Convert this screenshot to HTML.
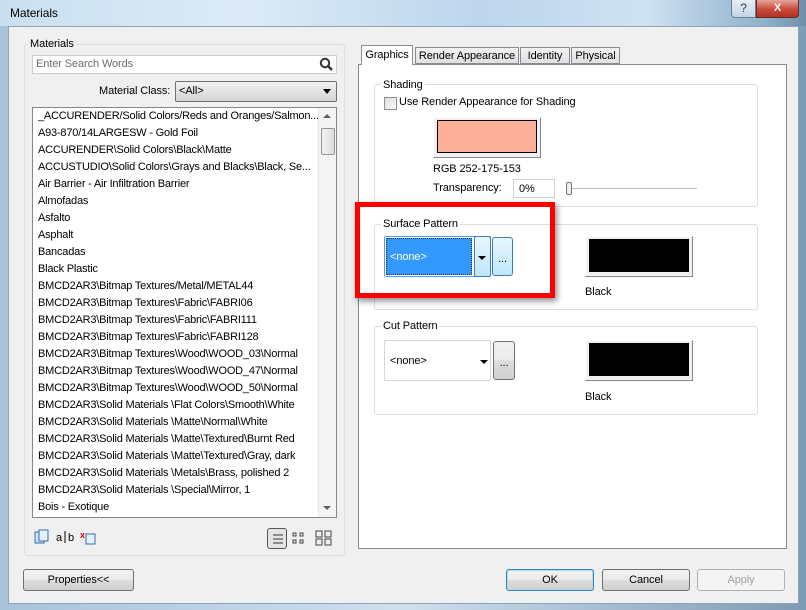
<!DOCTYPE html>
<html><head><style>
*{box-sizing:border-box;margin:0;padding:0}
body{width:806px;height:610px;overflow:hidden;background:#9fb9cf;font-family:"Liberation Sans",sans-serif;font-size:11px;color:#000;position:relative;letter-spacing:-0.1px}
.a{position:absolute}
.title{left:0;top:0;width:806px;height:27px;background:linear-gradient(90deg,#c9dff0 0%,#dcebf7 30%,#bcd6ec 60%,#cfe2f2 80%,#8fb0cc 95%,#6d8da8 100%)}
.frame{left:0;top:26px;width:806px;height:584px;background:linear-gradient(90deg,#a7c3da,#cfe0ee 50%,#7e9bb5)}
.body{left:8px;top:26px;width:791px;height:578px;background:#f0f0f0;border:1px solid #8ea4b8}
.grp{border:1px solid #d5dfe5;border-radius:3px}
.lbl{background:#f0f0f0;padding:0 2px}
.btn{border:1px solid #707070;border-radius:3px;background:linear-gradient(#f2f2f2 0%,#ebebeb 48%,#dddddd 52%,#cfcfcf 100%);text-align:center;line-height:21px;font-size:11px}
.li{position:absolute;left:5px;height:17px;line-height:17px;white-space:nowrap;letter-spacing:-0.2px}
</style></head><body>
<div class="a title"></div>
<div class="a frame"></div>
<div class="a" style="left:10px;top:6px;font-size:12px">Materials</div>
<div class="a" style="left:731px;top:0;width:25px;height:18px;border:1px solid #6b7f94;border-top:none;border-radius:0 0 0 4px;background:linear-gradient(#e6eef6,#c4d4e4);text-align:center;font-size:12px;color:#345;line-height:16px">?</div>
<div class="a" style="left:756px;top:0;width:43px;height:18px;border:1px solid #6b2a20;border-top:none;border-radius:0 0 4px 0;background:linear-gradient(#e6a59a,#c8493a 55%,#b33020);text-align:center;color:#fff;font-weight:bold;line-height:16px">X</div>
<div class="a body"></div>

<div class="a grp" style="left:24px;top:44px;width:321px;height:512px"></div>
<div class="a lbl" style="left:28px;top:38px">Materials</div>
<div class="a" style="left:32px;top:55px;width:305px;height:19px;background:#fff;border:1px solid #c8cfd6"></div>
<div class="a" style="left:36px;top:58px;color:#6d6d6d">Enter Search Words</div>
<svg class="a" style="left:319px;top:57px" width="15" height="15"><circle cx="6" cy="6" r="4.2" fill="none" stroke="#333" stroke-width="2"/><line x1="9" y1="9" x2="13" y2="13" stroke="#333" stroke-width="2.4"/></svg>
<div class="a" style="left:99px;top:85px">Material Class:</div>
<div class="a" style="left:175px;top:81px;width:162px;height:21px;border:1px solid #707070;border-radius:2px;background:linear-gradient(#f2f2f2,#e2e2e2 50%,#d4d4d4)"></div>
<div class="a" style="left:179px;top:85px">&lt;All&gt;</div>
<div class="a" style="left:323px;top:89px;width:0;height:0;border-left:4px solid transparent;border-right:4px solid transparent;border-top:5px solid #000"></div>

<div class="a" style="left:32px;top:107px;width:305px;height:411px;background:#fff;border:1px solid #828790;overflow:hidden">
<div class="li" style="top:0">_ACCURENDER/Solid Colors/Reds and Oranges/Salmon...</div>
<div class="li" style="top:17px">A93-870/14LARGESW - Gold Foil</div>
<div class="li" style="top:34px">ACCURENDER\Solid Colors\Black\Matte</div>
<div class="li" style="top:51px">ACCUSTUDIO\Solid Colors\Grays and Blacks\Black, Se...</div>
<div class="li" style="top:68px">Air Barrier - Air Infiltration Barrier</div>
<div class="li" style="top:85px">Almofadas</div>
<div class="li" style="top:102px">Asfalto</div>
<div class="li" style="top:119px">Asphalt</div>
<div class="li" style="top:136px">Bancadas</div>
<div class="li" style="top:153px">Black Plastic</div>
<div class="li" style="top:170px">BMCD2AR3\Bitmap Textures/Metal/METAL44</div>
<div class="li" style="top:187px">BMCD2AR3\Bitmap Textures\Fabric\FABRI06</div>
<div class="li" style="top:204px">BMCD2AR3\Bitmap Textures\Fabric\FABRI111</div>
<div class="li" style="top:221px">BMCD2AR3\Bitmap Textures\Fabric\FABRI128</div>
<div class="li" style="top:238px">BMCD2AR3\Bitmap Textures\Wood\WOOD_03\Normal</div>
<div class="li" style="top:255px">BMCD2AR3\Bitmap Textures\Wood\WOOD_47\Normal</div>
<div class="li" style="top:272px">BMCD2AR3\Bitmap Textures\Wood\WOOD_50\Normal</div>
<div class="li" style="top:289px">BMCD2AR3\Solid Materials \Flat Colors\Smooth\White</div>
<div class="li" style="top:306px">BMCD2AR3\Solid Materials \Matte\Normal\White</div>
<div class="li" style="top:323px">BMCD2AR3\Solid Materials \Matte\Textured\Burnt Red</div>
<div class="li" style="top:340px">BMCD2AR3\Solid Materials \Matte\Textured\Gray, dark</div>
<div class="li" style="top:357px">BMCD2AR3\Solid Materials \Metals\Brass, polished 2</div>
<div class="li" style="top:374px">BMCD2AR3\Solid Materials \Special\Mirror, 1</div>
<div class="li" style="top:391px">Bois - Exotique</div>
<div class="a" style="left:285px;top:0;width:18px;height:409px;background:#f4f4f4;border-left:1px solid #e8e8e8"></div>
<div class="a" style="left:290px;top:6px;border-left:4px solid transparent;border-right:4px solid transparent;border-bottom:4px solid #606060"></div>
<div class="a" style="left:288px;top:20px;width:14px;height:27px;border:1px solid #979797;border-radius:2px;background:linear-gradient(90deg,#f2f2f2,#dcdcdc)"></div>
<div class="a" style="left:290px;top:398px;border-left:4px solid transparent;border-right:4px solid transparent;border-top:4px solid #606060"></div>
</div>
<svg class="a" style="left:34px;top:529px" width="80" height="16"><rect x="1" y="3" width="9" height="11" fill="#cfe3f7" stroke="#2f6fb7"/><rect x="5" y="1" width="9" height="11" fill="#e6f0fb" stroke="#2f6fb7"/><text x="22" y="12" font-size="11" font-family="Liberation Sans">a</text><line x1="31" y1="2" x2="31" y2="14" stroke="#000"/><text x="34" y="12" font-size="11" font-family="Liberation Sans">b</text><rect x="52" y="5" width="9" height="10" fill="#e6f0fb" stroke="#2f6fb7"/><text x="46" y="9" font-size="9" fill="#d00" font-weight="bold">x</text></svg>
<div class="a" style="left:267px;top:528px;width:20px;height:21px;border:1px solid #555;border-radius:3px;background:#e4e4e4"></div>
<svg class="a" style="left:269px;top:530px" width="70" height="17"><g stroke="#333"><line x1="4" y1="5" x2="14" y2="5"/><line x1="4" y1="9" x2="14" y2="9"/><line x1="4" y1="13" x2="14" y2="13"/></g><g fill="none" stroke="#444"><rect x="24" y="3" width="3" height="3"/><rect x="31" y="3" width="3" height="3"/><rect x="24" y="10" width="3" height="3"/><rect x="31" y="10" width="3" height="3"/><rect x="47" y="1" width="6" height="6"/><rect x="56" y="1" width="6" height="6"/><rect x="47" y="9" width="6" height="6"/><rect x="56" y="9" width="6" height="6"/></g></svg>

<div class="a" style="left:358px;top:64px;width:429px;height:485px;background:#fff;border:1px solid #898c95"></div>
<div class="a" style="left:361px;top:45px;width:52px;height:20px;background:#fff;border:1px solid #898c95;border-bottom:none;line-height:19px;text-align:center">Graphics</div>
<div class="a" style="left:415px;top:47px;width:104px;height:17px;background:linear-gradient(#f2f2f2,#e0e0e0);border:1px solid #898c95;line-height:17px;text-align:center">Render Appearance</div>
<div class="a" style="left:520px;top:47px;width:50px;height:17px;background:linear-gradient(#f2f2f2,#e0e0e0);border:1px solid #898c95;line-height:17px;text-align:center">Identity</div>
<div class="a" style="left:571px;top:47px;width:49px;height:17px;background:linear-gradient(#f2f2f2,#e0e0e0);border:1px solid #898c95;line-height:17px;text-align:center">Physical</div>

<div class="a grp" style="left:374px;top:84px;width:384px;height:123px"></div>
<div class="a" style="left:381px;top:79px;background:#fff;padding:0 2px">Shading</div>
<div class="a" style="left:384px;top:97px;width:13px;height:13px;border:1px solid #8f8f8f;background:linear-gradient(135deg,#ddd,#fbfbfb)"></div>
<div class="a" style="left:399px;top:96px">Use Render Appearance for Shading</div>
<div class="a" style="left:433px;top:117px;width:108px;height:41px;background:#f0f0f0;border:1px solid #fff;border-right-color:#888;border-bottom-color:#888"></div>
<div class="a" style="left:437px;top:120px;width:100px;height:33px;background:#fcaf99;border:1px solid #000"></div>
<div class="a" style="left:433px;top:163px">RGB 252-175-153</div>
<div class="a" style="left:433px;top:182px">Transparency:</div>
<div class="a" style="left:513px;top:179px;width:42px;height:19px;border:1px solid #d0d0d0;background:#fff;padding:3px 5px">0%</div>
<div class="a" style="left:570px;top:188px;width:127px;height:1px;background:#bbb"></div>
<div class="a" style="left:566px;top:182px;width:6px;height:13px;border:1px solid #777;border-radius:2px;background:#eee"></div>

<div class="a grp" style="left:374px;top:224px;width:384px;height:86px"></div>
<div class="a" style="left:381px;top:218px;background:#fff;padding:0 2px">Surface Pattern</div>
<div class="a" style="left:384px;top:236px;width:107px;height:41px;border:1px solid #569de5;border-radius:2px;background:#fff"></div>
<div class="a" style="left:386px;top:238px;width:86px;height:37px;background:#3399ff;border:1px dotted #333"></div>
<div class="a" style="left:390px;top:251px;color:#fff">&lt;none&gt;</div>
<div class="a" style="left:474px;top:236px;width:17px;height:41px;border:1px solid #3c7fb1;border-radius:2px;background:linear-gradient(#eaf6fd,#bee6fd)"></div>
<div class="a" style="left:478px;top:256px;border-left:4px solid transparent;border-right:4px solid transparent;border-top:4px solid #000"></div>
<div class="a" style="left:492px;top:237px;width:21px;height:39px;border:1px solid #3c7fb1;border-radius:3px;background:linear-gradient(#eaf6fd,#bee6fd);text-align:center;line-height:42px">...</div>
<div class="a" style="left:585px;top:236px;width:108px;height:41px;background:#f0f0f0;border:1px solid #fff;border-right-color:#888;border-bottom-color:#888"></div>
<div class="a" style="left:589px;top:239px;width:100px;height:33px;background:#000"></div>
<div class="a" style="left:585px;top:286px">Black</div>
<div class="a" style="left:355px;top:202px;width:200px;height:96px;border:5px solid #f00;box-shadow:2px 3px 6px rgba(0,0,0,.45)"></div>

<div class="a grp" style="left:374px;top:326px;width:384px;height:89px"></div>
<div class="a" style="left:381px;top:320px;background:#fff;padding:0 2px">Cut Pattern</div>
<div class="a" style="left:384px;top:340px;width:107px;height:41px;border:1px solid #d5d5d5;border-radius:2px;background:#fff"></div>
<div class="a" style="left:390px;top:355px">&lt;none&gt;</div>
<div class="a" style="left:480px;top:360px;border-left:4px solid transparent;border-right:4px solid transparent;border-top:4px solid #000"></div>
<div class="a" style="left:493px;top:341px;width:22px;height:39px;border:1px solid #707070;border-radius:3px;background:linear-gradient(#f2f2f2,#ebebeb 48%,#dddddd 52%,#cfcfcf);text-align:center;line-height:42px">...</div>
<div class="a" style="left:585px;top:340px;width:108px;height:41px;background:#f0f0f0;border:1px solid #fff;border-right-color:#888;border-bottom-color:#888"></div>
<div class="a" style="left:589px;top:343px;width:100px;height:33px;background:#000"></div>
<div class="a" style="left:585px;top:391px">Black</div>

<div class="a btn" style="left:23px;top:569px;width:111px;height:22px">Properties&lt;&lt;</div>
<div class="a btn" style="left:506px;top:569px;width:88px;height:22px;border-color:#3c7fb1;box-shadow:inset 0 0 0 1px #a8e1fb">OK</div>
<div class="a btn" style="left:602px;top:569px;width:88px;height:22px">Cancel</div>
<div class="a btn" style="left:697px;top:569px;width:88px;height:22px;border-color:#adb2b5;background:#f4f4f4;color:#a0a0a0">Apply</div>
</body></html>
